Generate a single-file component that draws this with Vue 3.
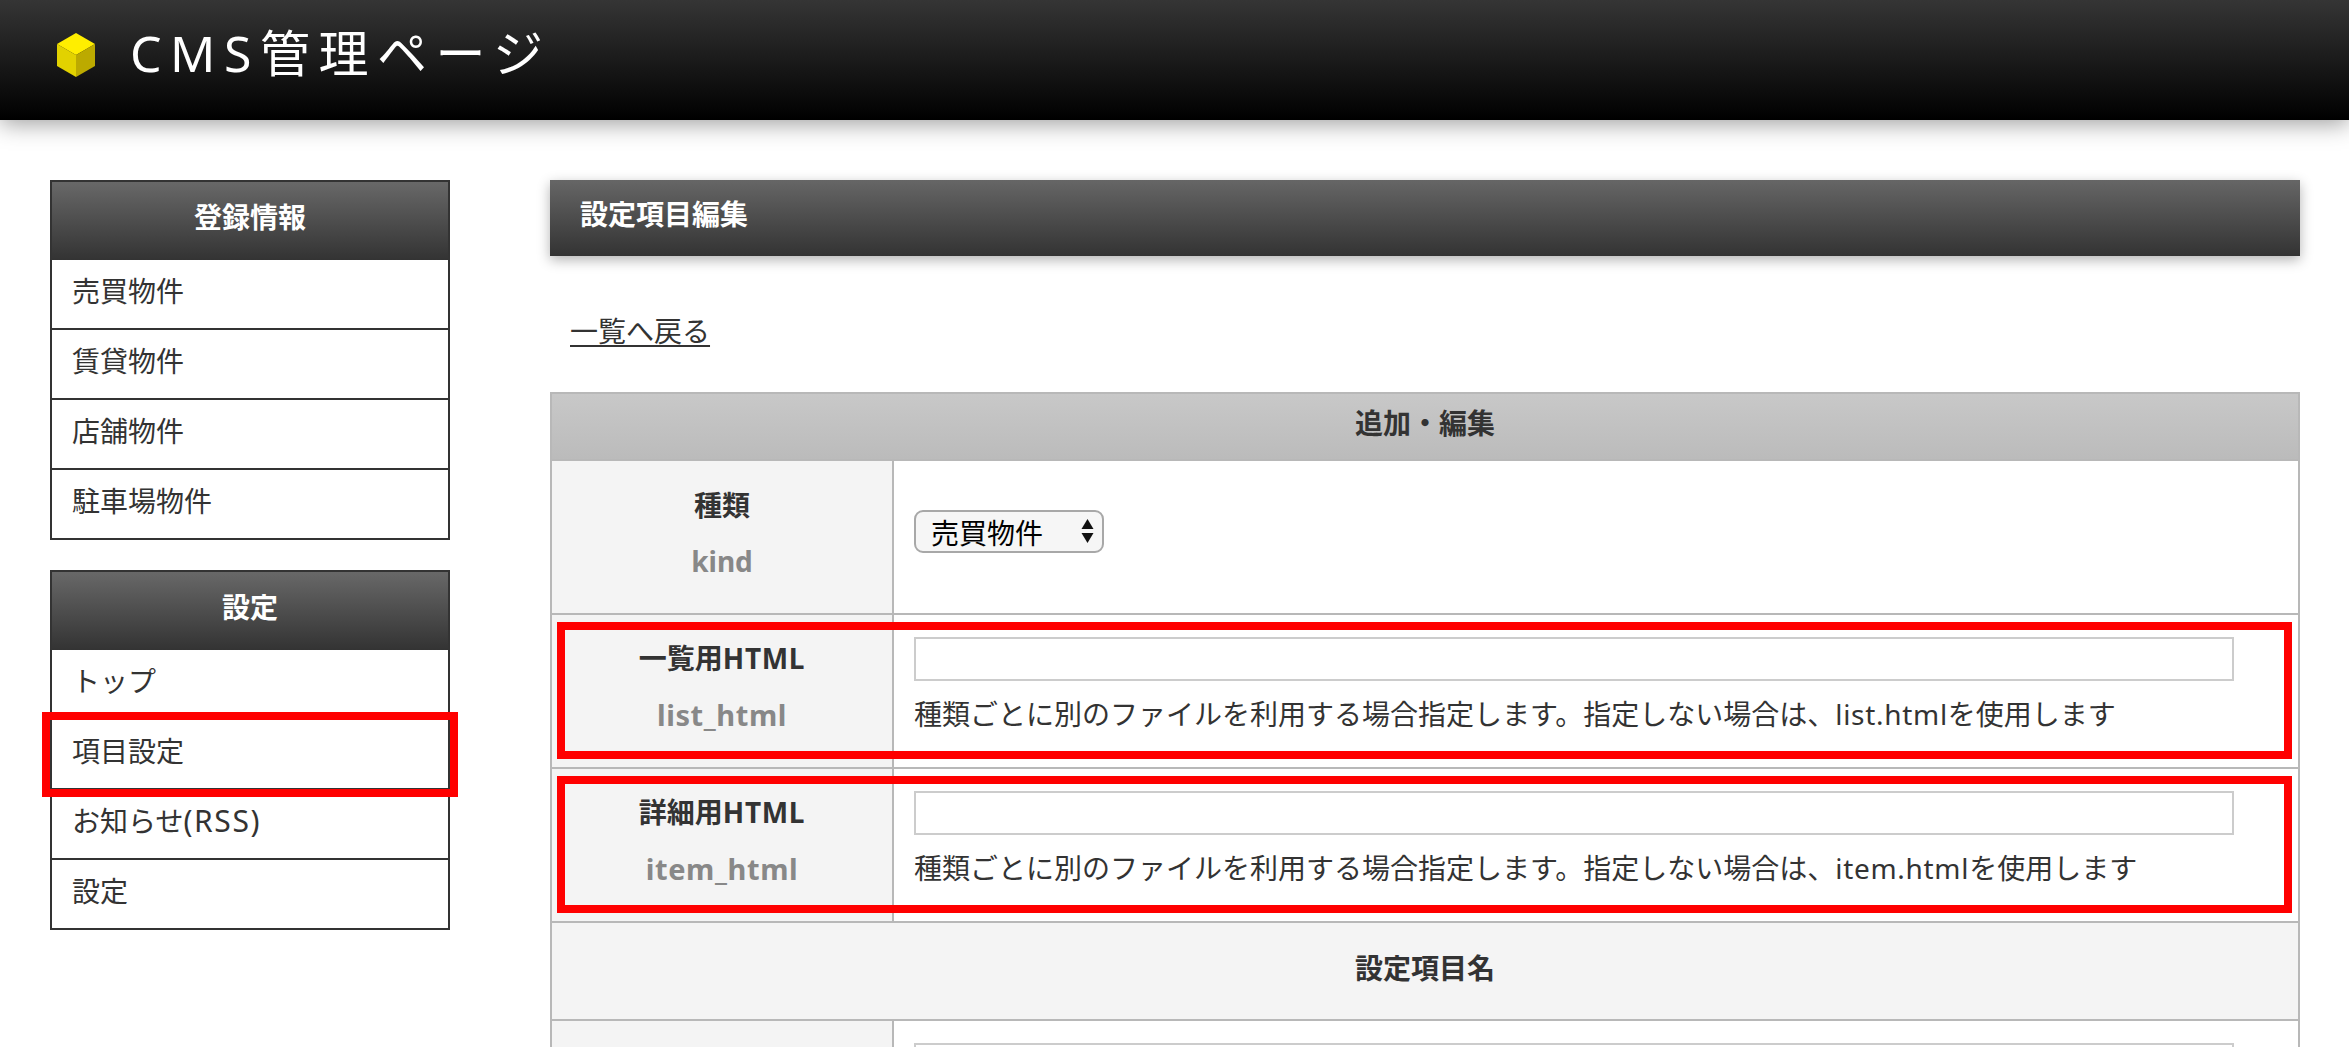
<script setup>
const menus = [
  { title: '登録情報', items: [{ t: '売買物件' }, { t: '賃貸物件' }, { t: '店舗物件' }, { t: '駐車場物件' }] },
  { title: '設定', items: [{ t: 'トップ' }, { t: '項目設定', mark: true }, { t: 'お知らせ', lat: '(RSS)' }, { t: '設定' }] }
]
const htmlRows = [
  { ja: '一覧用', jaLat: 'HTML', en: 'list_html', file: 'list.html' },
  { ja: '詳細用', jaLat: 'HTML', en: 'item_html', file: 'item.html' }
]
</script>

<template>
  <div class="page">
    <header class="top">
      <svg class="cube" viewBox="0 0 40 44" width="40" height="44">
        <polygon points="20,0 39,11 20,22 1,11" fill="#ffee00" />
        <polygon points="1,11 20,22 20,44 1,33" fill="#e2d200" />
        <polygon points="39,11 20,22 20,44 39,33" fill="#bcaa00" />
      </svg>
      <h1>CMS管理ページ</h1>
    </header>

    <div class="body">
      <nav class="side">
        <section v-for="m in menus" :key="m.title" class="menu">
          <h2>{{ m.title }}</h2>
          <ul>
            <li v-for="it in m.items" :key="it.t">
              <a>{{ it.t }}<span v-if="it.lat" class="rss">{{ it.lat }}</span></a>
              <span v-if="it.mark" class="mark mark-side"></span>
            </li>
          </ul>
        </section>
      </nav>

      <main class="main">
        <h2 class="title">設定項目編集</h2>
        <p class="back"><a>一覧へ戻る</a></p>

        <div class="table-wrap">
          <table>
            <colgroup><col class="c1" /><col /></colgroup>
            <thead>
              <tr class="r-head"><th colspan="2" class="head">追加・編集</th></tr>
            </thead>
            <tbody>
              <tr class="r-kind">
                <th class="label">
                  <div class="ja">種類</div>
                  <div class="en">kind</div>
                </th>
                <td class="field mid">
                  <div class="sel">
                    <select><option>売買物件</option></select>
                    <svg class="arrows" viewBox="0 0 13 26" width="13" height="26">
                      <polygon points="6.5,1 12.5,11 0.5,11" fill="#111" />
                      <polygon points="6.5,25 12.5,15 0.5,15" fill="#111" />
                    </svg>
                  </div>
                </td>
              </tr>
              <tr v-for="r in htmlRows" :key="r.en" class="r-html">
                <th class="label">
                  <div class="ja">{{ r.ja }}<span class="lat-b">{{ r.jaLat }}</span></div>
                  <div class="en wide">{{ r.en }}</div>
                </th>
                <td class="field">
                  <input type="text" />
                  <p class="desc">種類ごとに別のファイルを利用する場合指定します。指定しない場合は、<span class="file">{{ r.file }}</span>を使用します</p>
                </td>
              </tr>
              <tr class="r-sub"><th colspan="2" class="sub">設定項目名</th></tr>
              <tr class="r-last">
                <th class="label"></th>
                <td class="field"><input type="text" /></td>
              </tr>
            </tbody>
          </table>
          <span class="mark mark-a"></span>
          <span class="mark mark-b"></span>
        </div>
      </main>
    </div>
  </div>
</template>

<style>
html, body { margin: 0; background: #fff; overflow: hidden; height: 1047px; }
</style>

<style scoped>
.page {
  width: 2349px;
  height: 1047px;
  overflow: hidden;
  font-family: "Noto Sans", "Noto Sans CJK JP", sans-serif;
  color: #333;
  background: #fff;
}
.top {
  height: 120px;
  display: flex;
  align-items: center;
  padding: 0 0 10px 56px;
  box-sizing: border-box;
  background: linear-gradient(#353535, #000);
  box-shadow: 0 4px 22px rgba(0, 0, 0, 0.38);
  position: relative;
}
.cube { filter: blur(0.6px); flex: none; }
h1 {
  margin: -4px 0 0 34px;
  font-size: 50px;
  line-height: 60px;
  font-weight: 400;
  letter-spacing: 8.5px;
  color: #fff;
}
.body { display: flex; padding: 60px 0 0 50px; }
.side { width: 400px; flex: none; display: flex; flex-direction: column; gap: 30px; }
.menu { border: 2px solid #333; border-bottom-width: 0; }
.menu h2 {
  margin: 0;
  height: 78px;
  line-height: 70px;
  text-align: center;
  font-size: 28px;
  font-weight: 700;
  color: #fff;
  background: linear-gradient(#686868, #333);
}
.menu ul { list-style: none; margin: 0; padding: 0; }
.menu li {
  position: relative;
  height: 68px;
  line-height: 62px;
  padding-left: 20px;
  font-size: 28px;
  border-bottom: 2px solid #333;
}
.rss { font-size: 30px; letter-spacing: 1.6px; }
.mark { position: absolute; border: 8px solid #f00; box-sizing: border-box; pointer-events: none; }
.mark-side { left: -10px; top: -8px; width: 416px; height: 85px; }
.main { margin-left: 100px; width: 1750px; flex: none; }
.title {
  margin: 0;
  height: 76px;
  line-height: 68px;
  padding-left: 30px;
  font-size: 28px;
  font-weight: 700;
  color: #fff;
  background: linear-gradient(#666, #333);
  box-shadow: 0 4px 12px rgba(0, 0, 0, 0.3);
}
.back { margin: 55px 0 0 20px; font-size: 28px; line-height: 40px; height: 81px; }
.back a { text-decoration: underline; text-underline-offset: 3px; }
.table-wrap { position: relative; }
table {
  width: 100%;
  table-layout: fixed;
  border-collapse: collapse;
  font-size: 28px;
}
.c1 { width: 342px; }
th, td { border: 2px solid #b8b8b8; padding: 0; box-sizing: border-box; }
.r-head { height: 67px; }
.head {
  background: linear-gradient(#c8c8c8, #bbb);
  font-weight: 700;
  text-align: center;
  padding-bottom: 9px;
}
.r-kind { height: 154px; }
.r-html { height: 154px; }
.r-sub { height: 98px; }
.r-last { height: 80px; }
.label { background: #f4f4f4; vertical-align: top; font-weight: 700; padding-top: 16px; }
.ja { line-height: 56px; height: 56px; }
.en { line-height: 56px; height: 56px; color: #888; }
.wide { font-size: 29px; letter-spacing: 0.6px; }
.lat-b { letter-spacing: 0.7px; }
.r-html .label { padding-top: 15px; }
.r-html .en { padding-top: 1px; }
.sub { background: #f4f4f4; font-weight: 700; padding-bottom: 9px; }
.field { vertical-align: top; padding: 22px 0 0 20px; background: #fff; }
.field.mid { vertical-align: top; padding-top: 49px; }
input {
  display: block;
  width: 1320px;
  height: 44px;
  box-sizing: border-box;
  border: 2px solid #ccc;
  background: #fff;
  margin: 0;
  outline: none;
}
.desc { margin: 13px 0 0; line-height: 40px; }
.file { letter-spacing: 0.7px; }
.sel { position: relative; width: 190px; height: 43px; }
select {
  appearance: none;
  width: 190px;
  height: 43px;
  box-sizing: border-box;
  border: 2px solid #a8a8a8;
  border-radius: 9px;
  background: #f6f6f6;
  padding: 0 0 4px 15px;
  font: 28px "Noto Sans CJK JP", sans-serif;
  color: #000;
}
.arrows { position: absolute; right: 10px; top: 8px; }
.mark-a { left: 7px; top: 230px; width: 1735px; height: 137px; }
.mark-b { left: 7px; top: 384px; width: 1735px; height: 137px; }
</style>
